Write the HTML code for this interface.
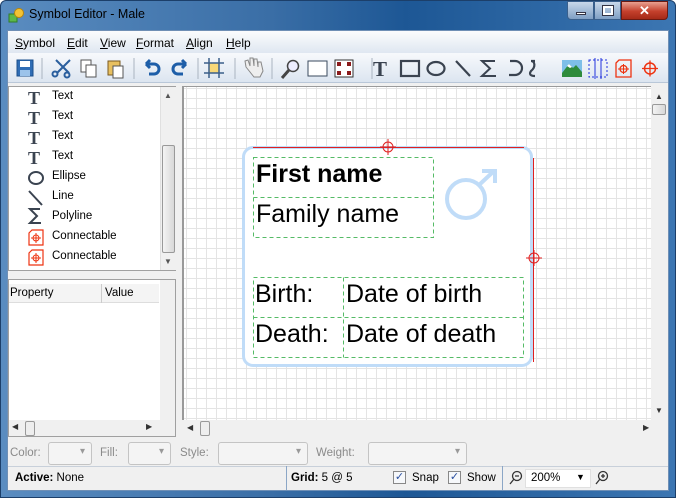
<!DOCTYPE html>
<html><head><meta charset="utf-8"><style>
*{box-sizing:border-box;margin:0;padding:0}
body{width:676px;height:498px;overflow:hidden;font-family:"Liberation Sans",sans-serif;font-size:12px;background:#fff;position:relative}
.abs{position:absolute}
.win{left:0;top:0;width:676px;height:498px;background:linear-gradient(90deg,#5a8cc0 0%,#3a6ea6 40%,#1d5795 60%,#3c76b2 100%);border-radius:6px 6px 0 0;border:1px solid #1c3f6a}
.inner{left:7px;top:30px;width:662px;height:461px;background:#f0f0f0;border:1px solid #6f8fb5}
.menu{left:8px;top:31px;width:660px;height:22px;background:linear-gradient(#fbfcfd,#dfe7f1)}
.menu span{position:absolute;top:5px;font-size:12px;color:#000}
.tb{left:8px;top:53px;width:660px;height:30px;background:linear-gradient(#f7f9fc,#dce5f0);border-bottom:1px solid #b9c7d8}
.list{left:8px;top:86px;width:168px;height:185px;background:#fff;border:1px solid #a0a0a0}
.list div{position:absolute;left:43px;font-size:11.5px}
.sb{background:#f0f0f0}
.canvas{left:182px;top:86px;width:469px;height:334px;background-color:#fff;background-image:linear-gradient(90deg,#e4e4e4 1px,transparent 1px),linear-gradient(#e4e4e4 1px,transparent 1px);background-size:10px 10px;background-position:2px 1px;border-left:2px solid #9a9a9a;border-top:1px solid #9a9a9a}
.lbl{color:#8a8a8a;position:absolute;top:447px;font-size:11.5px}
.cb{position:absolute;top:442px;height:23px;border:1px solid #c4c4c4;border-radius:3px;background:#f4f4f4}
.cb:after{content:"▾";position:absolute;right:6px;top:3px;color:#999;font-size:10px}
.t{position:absolute;color:#000;white-space:nowrap}
</style></head><body>
<div class="abs win"></div>
<svg class="abs" style="left:8px;top:8px" width="16" height="16"><rect x="1" y="6" width="8" height="8" fill="#5cb84b" stroke="#2f7d2a"/><circle cx="11" cy="5" r="4.5" fill="#f3c334" stroke="#b8860b"/></svg>
<div class="t" style="left:29px;top:7px;font-size:12.5px;color:#000">Symbol Editor - Male</div>
<div class="abs" style="left:567px;top:1px;width:27px;height:19px;border:1px solid #395f8c;border-radius:0 0 0 4px;background:linear-gradient(#c9d8ea,#7f9fc4)"><div class="abs" style="left:8px;top:10px;width:10px;height:3px;background:#fff;border:1px solid #334"></div></div>
<div class="abs" style="left:594px;top:1px;width:27px;height:19px;border:1px solid #395f8c;background:linear-gradient(#c9d8ea,#7f9fc4)"><div class="abs" style="left:8px;top:4px;width:10px;height:9px;border:2px solid #fff;outline:1px solid #334"></div></div>
<div class="abs" style="left:621px;top:1px;width:47px;height:19px;border:1px solid #6b1a12;border-radius:0 0 4px 0;background:linear-gradient(#e8a090,#c4402c 55%,#a52a18);color:#fff;font-weight:bold;font-size:13px;text-align:center;line-height:17px">✕</div>
<div class="abs inner"></div>
<div class="abs menu">
<span style="left:7px"><u>S</u>ymbol</span><span style="left:59px"><u>E</u>dit</span><span style="left:92px"><u>V</u>iew</span><span style="left:128px"><u>F</u>ormat</span><span style="left:178px"><u>A</u>lign</span><span style="left:218px"><u>H</u>elp</span>
</div>
<div class="abs tb">
<svg width="660" height="30" style="position:absolute;left:0;top:0" fill="none" stroke-width="2">
<rect x="9" y="7" width="16" height="16" fill="#2f6db5" stroke="#1b4f8c" stroke-width="1"/><rect x="12" y="8" width="10" height="6" fill="#fff" stroke="none"/><rect x="12" y="17" width="10" height="6" fill="#9cc3ea" stroke="none"/>
<line x1="34" y1="5" x2="34" y2="26" stroke="#aab4c0" stroke-width="1"/>
<g stroke="#2b5f9e"><line x1="48" y1="7" x2="61" y2="20"/><line x1="62" y1="7" x2="49" y2="20"/><circle cx="47" cy="21" r="2.5"/><circle cx="59" cy="22" r="2.5"/></g>
<g stroke="#555" stroke-width="1" fill="#fff"><rect x="73" y="7" width="10" height="12"/><rect x="78" y="12" width="10" height="12"/></g>
<g stroke="#7a5a20" stroke-width="1"><rect x="100" y="8" width="12" height="14" fill="#e8c060"/><rect x="105" y="13" width="10" height="12" fill="#fff" stroke="#555"/></g>
<line x1="126" y1="5" x2="126" y2="26" stroke="#aab4c0" stroke-width="1"/>
<path d="M138 11 h8 a5 5 0 0 1 0 10 h-5 M138 11 l4 -4 M138 11 l4 4" stroke="#1e5ea8" stroke-width="3"/>
<path d="M178 11 h-8 a5 5 0 0 0 0 10 h5 M178 11 l-4 -4 M178 11 l-4 4" stroke="#1e5ea8" stroke-width="3"/>
<line x1="190" y1="5" x2="190" y2="26" stroke="#aab4c0" stroke-width="1"/>
<rect x="201" y="10" width="10" height="10" fill="#f8d878" stroke="none"/><g stroke="#3b5f8a" stroke-width="1.5"><line x1="201" y1="5" x2="201" y2="25"/><line x1="211" y1="5" x2="211" y2="25"/><line x1="196" y1="10" x2="216" y2="10"/><line x1="196" y1="20" x2="216" y2="20"/></g>
<line x1="227" y1="5" x2="227" y2="26" stroke="#aab4c0" stroke-width="1"/>
<path d="M238 14 l8 10 h6 l3 -6 l-2 -9 l-3 0 l0 5 l-1 -8 l-3 0 l0 7 l-1 -8 l-3 0 l0 8 l-2 -6 l-3 1z" stroke="#888" stroke-width="1" fill="#eee"/>
<line x1="264" y1="5" x2="264" y2="26" stroke="#aab4c0" stroke-width="1"/>
<circle cx="285" cy="13" r="5.5" stroke="#444" stroke-width="1.5" fill="#eef"/><line x1="281" y1="17" x2="274" y2="25" stroke="#444" stroke-width="3"/>
<rect x="300" y="8" width="19" height="15" stroke="#3a4a5e" stroke-width="1" fill="#fff"/>
<rect x="327" y="7" width="18" height="17" fill="#fff" stroke="#333" stroke-width="1"/><g fill="#8b1a1a" stroke="none"><rect x="329" y="9" width="4" height="4"/><rect x="339" y="9" width="4" height="4"/><rect x="329" y="18" width="4" height="4"/><rect x="339" y="18" width="4" height="4"/></g>
<line x1="364" y1="5" x2="364" y2="26" stroke="#aab4c0" stroke-width="1"/>
</svg>
<div class="t" style="left:365px;top:4px;font-family:'Liberation Serif',serif;font-weight:bold;font-size:21px;color:#3a4350">T</div>
<svg width="275" height="30" style="position:absolute;left:385px;top:0" fill="none" stroke="#3a4350" stroke-width="2.2">
<rect x="8" y="8" width="18" height="15"/>
<ellipse cx="43" cy="15.5" rx="8.5" ry="6.5"/>
<line x1="63" y1="8" x2="77" y2="23"/>
<path d="M102 8 h-13 l8 7.5 l-8 7.5 h14" stroke-width="2"/>
<path d="M117 8 h5 a7 7 0 0 1 0 14 h-6"/>
<path d="M142 8 h-4 c4 0 5 6 0 10 c-2 3 -1 5 4 5"/>
<rect x="169" y="7" width="20" height="17" fill="#7ebfe8" stroke="none"/><path d="M169 20 l7 -9 l4 4 l3 -3 l6 7 v5 h-20z" fill="#2e8b3b" stroke="none"/><path d="M174 13 l2 -2 l3 3 l-2 1z" fill="#fff" stroke="none"/>
<g stroke="#2233dd" stroke-width="1"><rect x="196" y="7" width="18" height="17" stroke-dasharray="2 2"/><line x1="202" y1="5" x2="202" y2="26"/><line x1="208" y1="5" x2="208" y2="26"/></g>
<path d="M223 10 l3 -3 h12 v17 h-15z" stroke="#ee3311" stroke-width="1.3"/><circle cx="230.5" cy="16" r="3.5" stroke="#ee3311" stroke-width="1.3"/><path d="M225 16h11M230.5 11v10" stroke="#ee3311" stroke-width="1"/>
<circle cx="257" cy="15.5" r="5.5" stroke="#ee3311" stroke-width="1.5"/><path d="M249 15.5h16M257 7.5v16" stroke="#ee3311" stroke-width="1.3"/>
</svg>
</div>
<div class="abs list">
<div style="top:3px">Text</div><div style="top:23px">Text</div><div style="top:43px">Text</div><div style="top:63px">Text</div><div style="top:83px">Ellipse</div><div style="top:103px">Line</div><div style="top:123px">Polyline</div><div style="top:143px">Connectable</div><div style="top:163px">Connectable</div>
<svg class="abs" style="left:17px;top:0" width="24" height="185" fill="none" stroke="#3a4350" stroke-width="2">
<g font-family="Liberation Serif" font-weight="bold" font-size="18" fill="#3a4350" stroke="none"><text x="2" y="17">T</text><text x="2" y="37">T</text><text x="2" y="57">T</text><text x="2" y="77">T</text></g>
<ellipse cx="10" cy="91" rx="7" ry="6"/>
<line x1="3" y1="104" x2="16" y2="118"/>
<path d="M14 122 h-10 l7 7 l-7 7 h11"/>
<path d="M3 146 l3 -3 h11 v15 h-14z" stroke="#ee3311" stroke-width="1.2"/><circle cx="10" cy="151" r="3" stroke="#ee3311" stroke-width="1"/><path d="M5 151h10M10 146v10" stroke="#ee3311" stroke-width="1"/>
<path d="M3 166 l3 -3 h11 v15 h-14z" stroke="#ee3311" stroke-width="1.2"/><circle cx="10" cy="171" r="3" stroke="#ee3311" stroke-width="1"/><path d="M5 171h10M10 166v10" stroke="#ee3311" stroke-width="1"/>
</svg>
<div class="abs sb" style="left:151px;top:0;width:16px;height:183px;border-left:1px solid #e0e0e0"></div>
<div class="abs" style="left:153px;top:58px;width:13px;height:108px;border:1px solid #999;border-radius:2px;background:linear-gradient(90deg,#f3f3f3,#d8d8d8)"></div>
<div class="t" style="left:155px;top:4px;font-size:8px;color:#555">▲</div><div class="t" style="left:155px;top:170px;font-size:8px;color:#555">▼</div>
</div>
<div class="abs" style="left:8px;top:279px;width:168px;height:158px;background:#fff;border:1px solid #a0a0a0"></div>
<div class="abs" style="left:9px;top:284px;width:150px;height:19px;background:#f4f4f4;border-bottom:1px solid #ddd"></div>
<div class="abs" style="left:101px;top:284px;width:1px;height:19px;background:#ccc"></div>
<div class="t" style="left:10px;top:287px;font-size:11.5px">Property</div><div class="t" style="left:105px;top:287px;font-size:11.5px">Value</div>
<div class="abs sb" style="left:160px;top:280px;width:15px;height:140px"></div>
<div class="abs sb" style="left:9px;top:420px;width:166px;height:16px"></div>
<div class="abs" style="left:25px;top:421px;width:10px;height:15px;border:1px solid #999;background:#eee;border-radius:2px"></div>
<div class="t" style="left:12px;top:422px;font-size:8px;color:#333">◀</div><div class="t" style="left:146px;top:422px;font-size:8px;color:#333">▶</div>
<div class="abs canvas"></div>
<div class="abs sb" style="left:651px;top:86px;width:17px;height:334px"></div>
<div class="abs" style="left:652px;top:104px;width:14px;height:11px;border:1px solid #999;border-radius:2px;background:linear-gradient(90deg,#f3f3f3,#d8d8d8)"></div>
<div class="t" style="left:655px;top:92px;font-size:8px;color:#333">▲</div><div class="t" style="left:655px;top:406px;font-size:8px;color:#333">▼</div>
<div class="abs sb" style="left:182px;top:420px;width:486px;height:17px"></div>
<div class="abs" style="left:200px;top:421px;width:10px;height:15px;border:1px solid #999;background:#eee;border-radius:2px"></div>
<div class="t" style="left:187px;top:423px;font-size:8px;color:#333">◀</div><div class="t" style="left:643px;top:423px;font-size:8px;color:#333">▶</div>
<div class="abs" style="left:242px;top:146px;width:291px;height:221px;border:3px solid #c0dcf8;border-radius:11px;background:#fff"></div>
<div class="abs" style="left:253px;top:147px;width:271px;height:1px;background:#e02020"></div>
<div class="abs" style="left:533px;top:158px;width:1px;height:204px;background:#e02020"></div>
<svg class="abs" style="left:378px;top:137px" width="20" height="20" fill="none" stroke="#e02020" stroke-width="1"><circle cx="10" cy="10" r="5"/><path d="M2 10h16M10 2v16"/></svg>
<svg class="abs" style="left:524px;top:248px" width="20" height="20" fill="none" stroke="#e02020" stroke-width="1"><circle cx="10" cy="10" r="5"/><path d="M2 10h16M10 2v16"/></svg>
<svg class="abs" style="left:252px;top:156px" width="274" height="204" fill="none" stroke="#55bb66" stroke-width="1" stroke-dasharray="4 3">
<rect x="1.5" y="1.5" width="180" height="80"/><line x1="1.5" y1="41.5" x2="181.5" y2="41.5"/>
<rect x="1.5" y="121.5" width="270" height="80"/><line x1="1.5" y1="161.5" x2="271.5" y2="161.5"/><line x1="91.5" y1="121.5" x2="91.5" y2="201.5"/>
</svg>
<svg class="abs" style="left:444px;top:166px" width="56" height="60" fill="none" stroke="#c0dcf8" stroke-width="4"><circle cx="22" cy="33" r="19"/><path d="M35 19 L50 5 M38 5 h13 v12"/></svg>
<div class="t" style="left:256px;top:160px;font-size:25px;font-weight:bold">First name</div>
<div class="t" style="left:256px;top:200px;font-size:25px">Family name</div>
<div class="t" style="left:255px;top:280px;font-size:25px">Birth:</div>
<div class="t" style="left:346px;top:280px;font-size:25px">Date of birth</div>
<div class="t" style="left:255px;top:320px;font-size:25px">Death:</div>
<div class="t" style="left:346px;top:320px;font-size:25px">Date of death</div>
<span class="lbl" style="left:10px">Color:</span><div class="cb" style="left:48px;width:44px"></div>
<span class="lbl" style="left:100px">Fill:</span><div class="cb" style="left:128px;width:43px"></div>
<span class="lbl" style="left:180px">Style:</span><div class="cb" style="left:218px;width:90px"></div>
<span class="lbl" style="left:316px">Weight:</span><div class="cb" style="left:368px;width:99px"></div>
<div class="abs" style="left:8px;top:466px;width:660px;height:24px;background:#f0f0f0;border-top:1px solid #c8d0da"></div>
<div class="abs" style="left:286px;top:466px;width:1px;height:24px;background:#8ba6c6"></div>
<div class="abs" style="left:502px;top:466px;width:1px;height:24px;background:#8ba6c6"></div>
<div class="t" style="left:15px;top:472px;font-size:11.5px"><b>Active:</b> None</div>
<div class="t" style="left:291px;top:472px;font-size:11.5px"><b>Grid:</b> 5 @ 5</div>
<div class="abs" style="left:393px;top:471px;width:13px;height:13px;border:1px solid #888;background:#f6f8fb;color:#2a4fa0;font-size:11px;line-height:11px;text-align:center">✓</div>
<div class="t" style="left:412px;top:472px;font-size:11.5px">Snap</div>
<div class="abs" style="left:448px;top:471px;width:13px;height:13px;border:1px solid #888;background:#f6f8fb;color:#2a4fa0;font-size:11px;line-height:11px;text-align:center">✓</div>
<div class="t" style="left:467px;top:472px;font-size:11.5px">Show</div>
<svg class="abs" style="left:508px;top:470px" width="16" height="16" fill="none" stroke="#333" stroke-width="1.3"><circle cx="9" cy="6" r="4.5"/><path d="M6 9 L2 14 M7 6h4"/></svg>
<div class="abs" style="left:525px;top:469px;width:66px;height:19px;background:#fff;border:1px solid #e0e0e0"></div>
<div class="t" style="left:531px;top:472px;font-size:11.5px">200%</div>
<div class="t" style="left:576px;top:472px;font-size:9px">▼</div>
<svg class="abs" style="left:594px;top:470px" width="16" height="16" fill="none" stroke="#333" stroke-width="1.3"><circle cx="9" cy="6" r="4.5"/><path d="M6 9 L2 14 M7 6h4M9 4v4"/></svg>
</body></html>
